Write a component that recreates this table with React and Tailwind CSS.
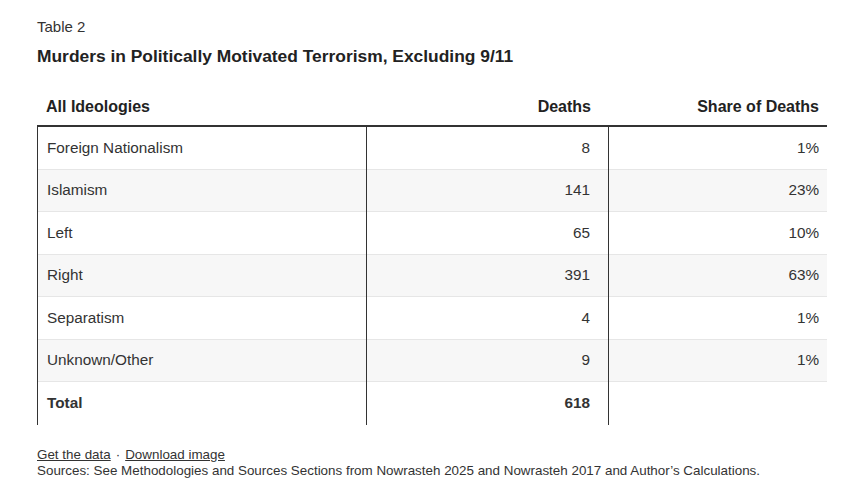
import React from "react";

const ROWS = [
  { name: "Foreign Nationalism", deaths: "8", share: "1%" },
  { name: "Islamism", deaths: "141", share: "23%" },
  { name: "Left", deaths: "65", share: "10%" },
  { name: "Right", deaths: "391", share: "63%" },
  { name: "Separatism", deaths: "4", share: "1%" },
  { name: "Unknown/Other", deaths: "9", share: "1%" },
];

function Row({ name, deaths, share, shaded, bold, last }) {
  return (
    <div
      className={
        "flex h-[42.5px] " +
        (shaded ? "bg-[#f7f7f7] " : "bg-white ") +
        (last ? "" : "shadow-[inset_0_-1px_0_#e6e6e6]")
      }
    >
      <div
        className={
          "flex w-[330px] items-center border-x border-[#333] pl-[9px] " +
          (bold ? "font-bold" : "")
        }
      >
        {name}
      </div>
      <div
        className={
          "flex w-[242px] items-center justify-end border-r border-[#333] pr-[18px] " +
          (bold ? "font-bold" : "")
        }
      >
        {deaths}
      </div>
      <div className="flex flex-1 items-center justify-end pr-[8px]">
        {share}
      </div>
    </div>
  );
}

export default function App() {
  return (
    <div className="h-[490px] w-[856px] bg-white pl-[37px] pr-[29px] pt-[17px] font-['Liberation_Sans',Arial,sans-serif] text-[#333]">
      <div className="text-[15px] leading-[20px]">Table 2</div>
      <h1 className="mt-[7px] text-[17.4px] font-bold leading-[24px] text-[#222]">
        Murders in Politically Motivated Terrorism, Excluding 9/11
      </h1>

      {/* table */}
      <div className="mt-[19px] text-[15.3px]">
        <div className="flex h-[40px] items-center border-b-2 border-[#333] pt-[2px] text-[16px] font-bold text-[#222]">
          <div className="w-[330px] pl-[9px]">All Ideologies</div>
          <div className="w-[242px] pr-[18px] text-right">Deaths</div>
          <div className="flex-1 pr-[8px] text-right">Share of Deaths</div>
        </div>
        {ROWS.map((r, i) => (
          <Row key={r.name} {...r} shaded={i % 2 === 1} />
        ))}
        <Row name="Total" deaths="618" share="" bold last />
      </div>

      <div className="mt-[22px] text-[13.4px] leading-[16px]">
        <div>
          <span className="underline">Get the data</span>
          <span className="mx-[5px]">·</span>
          <span className="underline">Download image</span>
        </div>
        <div>
          Sources: See Methodologies and Sources Sections from Nowrasteh 2025
          and Nowrasteh 2017 and Author’s Calculations.
        </div>
      </div>
    </div>
  );
}
